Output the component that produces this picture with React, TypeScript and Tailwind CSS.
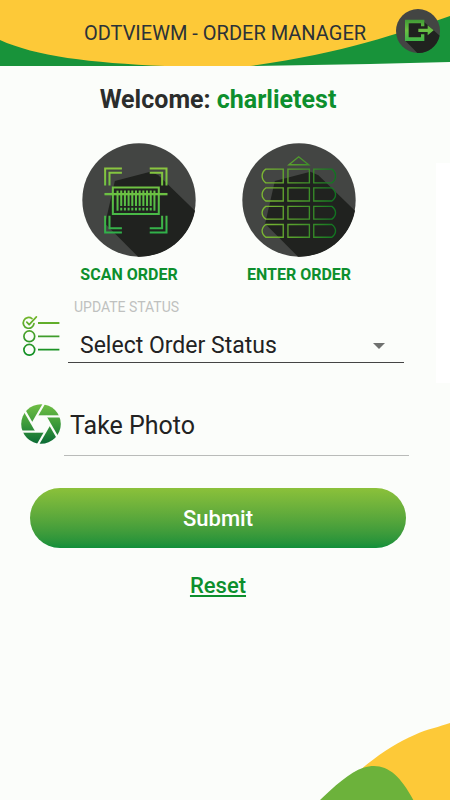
import React from 'react';

const orderStatuses = ['Select Order Status', 'Received', 'In Progress', 'Shipped', 'Delivered'];

// x positions of the bars inside the barcode icon
const bars = [142, 153, 164, 175, 186, 197, 208, 219, 230, 241, 252];
const keypadRows = [
  { y: 116, h: 41 },
  { y: 172, h: 39 },
  { y: 227, h: 38 },
  { y: 281, h: 38 },
];

function Disc() {
  return (
    <>
      <circle cx="206" cy="208" r="169" fill="#434543" />
      <path d="M134 151L240 124L264 134L373 240A169 169 0 0 1 203 377L105 279Z" fill="#20221f" />
    </>
  );
}

function ScanIcon() {
  return (
    <svg viewBox="36 38 340 340" className="size-[114px]" aria-hidden="true">
      <defs>
        <linearGradient id="scan" gradientUnits="userSpaceOnUse" x1="0" y1="110" x2="0" y2="308">
          <stop offset="0" stopColor="#8cc63f" />
          <stop offset="0.5" stopColor="#5cbf45" />
          <stop offset="1" stopColor="#2fb04a" />
        </linearGradient>
      </defs>
      <Disc />
      <g stroke="url(#scan)" fill="none" strokeWidth="6">
        <path d="M155 114H105V165M155 127H118V165" />
        <path d="M238 114H288V165M238 127H275V165" />
        <path d="M155 305H105V255M155 292H118V255" />
        <path d="M238 305H288V255M238 292H275V255" />
        <path d="M128 171H265V250H128Z" />
        {bars.map((x, i) => (
          <path
            key={x}
            d={i === 0 || i === 10 ? `M${x} 180V240` : `M${x} 180V226M${x} 231V239`}
          />
        ))}
      </g>
      <rect x="103" y="187" width="188" height="7" fill="#6cc043" />
    </svg>
  );
}

function KeypadIcon() {
  return (
    <svg viewBox="36 38 340 340" className="size-[114px]" aria-hidden="true">
      <defs>
        <linearGradient id="keypad" gradientUnits="userSpaceOnUse" x1="95" y1="0" x2="316" y2="0">
          <stop offset="0" stopColor="#7db932" />
          <stop offset="0.5" stopColor="#4f9a2c" />
          <stop offset="1" stopColor="#0f7420" />
        </linearGradient>
      </defs>
      <Disc />
      <g stroke="url(#keypad)" fill="none" strokeWidth="4">
        <path d="M176 103L205 79L235 103Z" />
        {keypadRows.map(({ y, h }) => (
          <g key={y}>
            <path d={`M159 ${y}H107Q96 ${y + 8} 96 ${y + h / 2}T107 ${y + h}H159Z`} />
            <path d={`M173 ${y}H237V${y + h}H173Z`} />
            <path d={`M250 ${y}H304Q315 ${y + 8} 315 ${y + h / 2}T304 ${y + h}H250Z`} />
          </g>
        ))}
      </g>
    </svg>
  );
}

function LogoutIcon() {
  return (
    <svg viewBox="513 27 132 132" className="size-11" aria-hidden="true">
      <defs>
        <linearGradient id="logout" x1="0" y1="0" x2="0" y2="1">
          <stop offset="0" stopColor="#3f9b35" />
          <stop offset="0.5" stopColor="#6cc043" />
          <stop offset="1" stopColor="#3fb549" />
        </linearGradient>
      </defs>
      <circle cx="579" cy="93" r="66" fill="#434543" />
      <path d="M541 122L577 159A66 66 0 0 0 644 107L626 91L597 66L551 70Z" fill="#20221f" />
      <path
        d="M540 59H598V70H551V112H588V103H598V123H540ZM588 59H598V79H588ZM580 86H608V76L626 91L608 106V96H580Z"
        fill="url(#logout)"
      />
    </svg>
  );
}

function ChecklistIcon() {
  return (
    <svg viewBox="0 0 40 42" className="h-[42px] w-10 shrink-0" fill="none" aria-hidden="true">
      <defs>
        <linearGradient id="list" gradientUnits="userSpaceOnUse" x1="0" y1="0" x2="0" y2="40">
          <stop offset="0" stopColor="#76b82a" />
          <stop offset="0.55" stopColor="#3d9c2b" />
          <stop offset="1" stopColor="#0d8f22" />
        </linearGradient>
      </defs>
      <g stroke="url(#list)" strokeWidth="1.7" strokeLinecap="round" strokeLinejoin="round">
        <path d="M12 3.6A5.4 5.4 0 1 0 14 8.6" />
        <path d="M6.8 7.2L9.2 9.6L16.4 1.9" />
        <circle cx="9.3" cy="21.3" r="5.4" />
        <circle cx="9.3" cy="34.8" r="5.4" />
      </g>
      <path d="M18 7.1H39.4V8.9H18ZM18 20.4H39.4V22.2H18ZM18 33.8H39.4V35.6H18Z" fill="url(#list)" />
    </svg>
  );
}

function ApertureIcon() {
  return (
    <svg viewBox="-20 -20 40 40" className="size-10 shrink-0" aria-hidden="true">
      <defs>
        <linearGradient id="aperture" x1="0" y1="0" x2="0" y2="1">
          <stop offset="0" stopColor="#6fbe44" />
          <stop offset="0.5" stopColor="#3c9a3a" />
          <stop offset="1" stopColor="#0a6b35" />
        </linearGradient>
      </defs>
      <circle r="19.8" fill="url(#aperture)" />
      <path d="M-4.4 -7.6H4.4L8.8 0L4.4 7.6H-4.4L-8.8 0Z" fill="#fbfdfa" />
      {[0, 60, 120, 180, 240, 300].map((angle) => (
        <path
          key={angle}
          d="M-4.4 -7.6H21"
          stroke="#fbfdfa"
          strokeWidth="2.2"
          transform={`rotate(${angle})`}
        />
      ))}
    </svg>
  );
}

function App() {
  return (
    <div className="relative flex min-h-screen flex-col overflow-hidden bg-[#fbfdfa] font-['Roboto',sans-serif] text-[#222]">
      <header className="relative flex h-[66px] items-center justify-center">
        <svg
          viewBox="0 0 450 66"
          preserveAspectRatio="none"
          className="absolute inset-0 size-full"
          aria-hidden="true"
        >
          <path d="M0 10H450V62Q350 65 250 66H0Z" fill="#18933a" />
          <path d="M0 0H450V16C400 33 340 54 250 66H165C90 63 35 56 0 40Z" fill="#fdc938" />
        </svg>
        <h1 className="relative text-[20px] leading-6 text-[#2b3238]">ODTVIEWM - ORDER MANAGER</h1>
        <button type="button" aria-label="Log out" className="absolute top-[9px] right-[10px]">
          <LogoutIcon />
        </button>
      </header>

      {/* lighter band along the right edge */}
      <div className="absolute top-[163px] right-0 h-[220px] w-[14px] bg-white" />

      <main className="mr-[14px] flex flex-col">
        <h2 className="mt-[18px] text-center text-[25px] leading-8 font-bold text-[#2b2d2c]">
          Welcome: <span className="text-[#0d8f2d]">charlietest</span>
        </h2>

        <div className="mt-[27px] flex justify-center gap-[46px] pl-[2px]">
          <button
            type="button"
            className="flex w-[114px] flex-col items-center gap-2 text-[16px] leading-5 font-bold whitespace-nowrap text-[#0d8f2d]"
          >
            <ScanIcon />
            <span className="-ml-5">SCAN ORDER</span>
          </button>
          <button
            type="button"
            className="flex w-[114px] flex-col items-center gap-2 text-[16px] leading-5 font-bold whitespace-nowrap text-[#0d8f2d]"
          >
            <KeypadIcon />
            <span>ENTER ORDER</span>
          </button>
        </div>

        <div className="mt-3 flex items-end gap-2 pr-8 pl-5">
          <div className="pb-[6px]">
            <ChecklistIcon />
          </div>
          <div className="flex flex-1 flex-col">
            <label htmlFor="status" className="pl-[6px] text-[14px] leading-5 text-[#bfc1bf]">
              UPDATE STATUS
            </label>
            <div className="relative mt-[10px]">
              <select
                id="status"
                defaultValue="Select Order Status"
                className="h-9 w-full appearance-none border-b border-[#444] bg-transparent pt-1 pb-[2px] pl-3 text-[23px] leading-7"
              >
                {orderStatuses.map((status) => (
                  <option key={status}>{status}</option>
                ))}
              </select>
              <svg
                viewBox="0 0 12 6"
                className="pointer-events-none absolute top-4 right-[19px] h-[6px] w-3"
                aria-hidden="true"
              >
                <path d="M0 0H12L6 6Z" fill="#6f716f" />
              </svg>
            </div>
          </div>
        </div>

        <div className="mt-[37px] flex items-start pr-[27px] pl-[21px]">
          <div className="pt-1">
            <ApertureIcon />
          </div>
          <button
            type="button"
            className="ml-[3px] h-14 flex-1 border-b border-[#b9bbb9] pb-1 pl-[6px] text-left text-[25px]"
          >
            Take Photo
          </button>
        </div>

        <button
          type="button"
          className="mx-[30px] mt-8 h-[60px] rounded-full bg-linear-to-b from-[#8bc13a] to-[#0f8f3a] text-[22px] font-medium text-white"
        >
          Submit
        </button>
        <a
          href="#reset"
          className="mt-6 self-center text-[22px] leading-7 font-medium text-[#0d8f2d] underline"
        >
          Reset
        </a>
      </main>

      <svg viewBox="60 69 390 231" className="mt-auto h-[77px] w-[130px] self-end" aria-hidden="true">
        <path d="M450 69C420 80 380 88 345 104C290 127 240 160 185 206V300H450Z" fill="#fdc938" />
        <path d="M60 300C100 262 150 215 190 203C250 185 295 215 340 300Z" fill="#6cb23b" />
      </svg>
    </div>
  );
}

export default App;
